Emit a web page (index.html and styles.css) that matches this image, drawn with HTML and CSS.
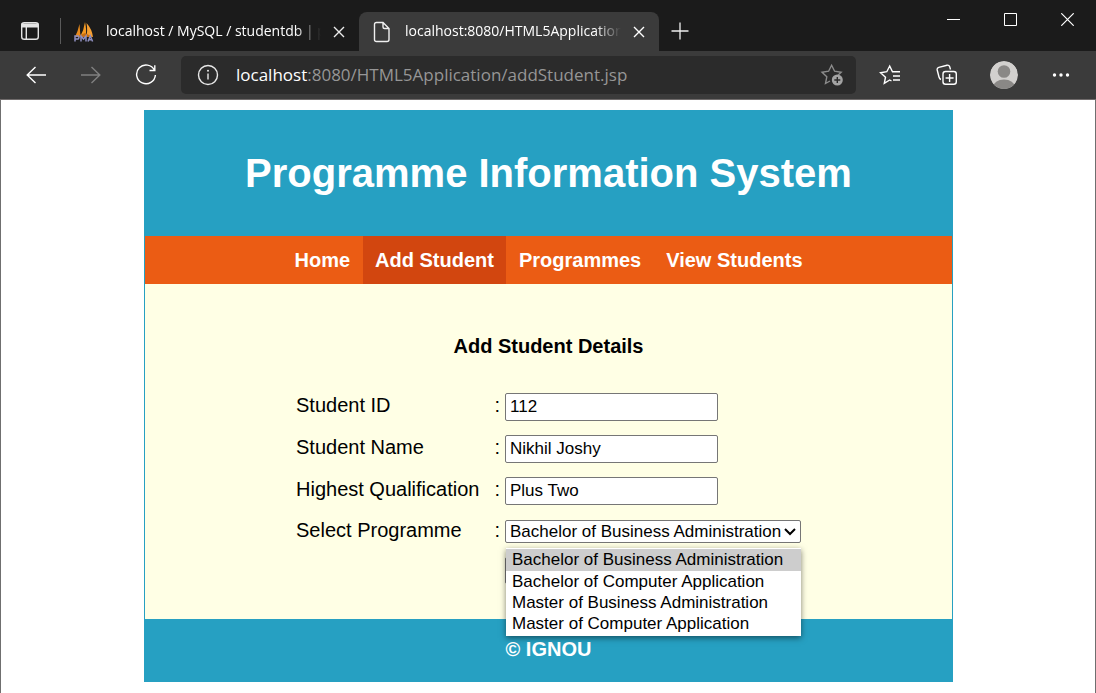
FILE: index.html
```html
<!DOCTYPE html>
<html lang="en">
<head>
<meta charset="utf-8">
<title>Programme Information System</title>
<link rel="stylesheet" href="styles.css">
</head>
<body>
<div class="browser">
  <header class="titlebar">
    <button class="tab-actions" aria-label="Tab actions">
      <svg width="20" height="20" viewBox="0 0 20 20" fill="none" stroke="#e4e4e4" stroke-width="1.4"><rect x="1.7" y="1.7" width="16.6" height="16.6" rx="2.6"/><path d="M2 3.2h16v2.6H2z" fill="#e4e4e4"/><path d="M6.3 6v12"/></svg>
    </button>
    <div class="tab">
      <svg class="tab-icon" width="20" height="20" viewBox="0 0 20 20"><path d="M1 15Q4 9 5.500 2L6.500 15z" fill="#e88a1c"/><path d="M6 15Q10 8 11 0Q13 9 11.500 15z" fill="#f59a23"/><path d="M12 15Q14 9 12.500 1Q18 7 19 15z" fill="#f7a033"/><path d="M2 15L11 11L19 15z" fill="#c96f12"/><path d="M1 19.500V14h3.200q1.500 1.700 0 3H1M7 19.500V14l2.500 3L12 14v5.500M14 19.500l2.300-5.500 2.300 5.500M15 17.700h3" stroke="#8f8fc0" fill="none" stroke-width="1.500"/></svg>
      <span class="tab-title">localhost / MySQL / studentdb | phpMyAdmin</span>
      <button class="tab-close" aria-label="Close tab"><svg width="12" height="12" viewBox="0 0 12 12" stroke="#ececec" stroke-width="1.4"><path d="M1 1l10 10M11 1L1 11"/></svg></button>
    </div>
    <div class="tab tab-active">
      <svg class="tab-icon" width="18" height="22" viewBox="0 0 18 22" fill="none" stroke="#f0f0f0" stroke-width="1.4"><path d="M3.500 1.500H10L16 7.500V18.500Q16 20.500 14 20.500H3.500Q1.500 20.500 1.500 18.500V3.500Q1.500 1.500 3.500 1.500zM10 1.500V6Q10 7.500 11.500 7.500H16"/></svg>
      <span class="tab-title">localhost:8080/HTML5Application/addStudent.jsp</span>
      <button class="tab-close" aria-label="Close tab"><svg width="12" height="12" viewBox="0 0 12 12" stroke="#fff" stroke-width="1.4"><path d="M1 1l10 10M11 1L1 11"/></svg></button>
    </div>
    <button class="new-tab" aria-label="New tab"><svg width="18" height="18" viewBox="0 0 18 18" stroke="#f0f0f0" stroke-width="1.3"><path d="M9 0.500v17M0.500 9h17"/></svg></button>
    <div class="window-controls">
      <button aria-label="Minimize"><svg width="13" height="13" viewBox="0 0 13 13" stroke="#fff"><path d="M0 6.500h13"/></svg></button>
      <button aria-label="Maximize"><svg width="13" height="13" viewBox="0 0 13 13" stroke="#fff" fill="none"><path d="M.5.5h12v12H.5z"/></svg></button>
      <button aria-label="Close window"><svg width="13" height="13" viewBox="0 0 13 13" stroke="#fff" stroke-width="1.2"><path d="M.3.3l12.400 12.400M12.700.3L.3 12.700"/></svg></button>
    </div>
  </header>
  <div class="toolbar">
    <button class="tool nav-tool" aria-label="Back"><svg width="20" height="18" viewBox="0 0 20 18" fill="none" stroke="#fff" stroke-width="1.4"><path d="M9.500 1L1.200 9l8.300 8M1.200 9H20"/></svg></button>
    <button class="tool nav-tool" aria-label="Forward"><svg width="20" height="18" viewBox="0 0 20 18" fill="none" stroke="#808080" stroke-width="1.4"><path d="M10.500 1l8.300 8-8.300 8M18.800 9H0"/></svg></button>
    <button class="tool nav-tool" aria-label="Refresh"><svg width="22" height="22" viewBox="0 0 22 22" fill="none" stroke="#fff" stroke-width="1.4"><path d="M19.500 6.300A9.400 9.400 0 1 0 20.400 11M19.800 1.300v5.200h-5.300"/></svg></button>
    <div class="address">
      <button class="address-button" aria-label="Site information"><svg width="22" height="22" viewBox="0 0 22 22" fill="none" stroke="#e8e8e8" stroke-width="1.4"><circle cx="11" cy="11" r="9.500"/><path d="M11 9.500v6"/><circle cx="11" cy="6.800" r="1" fill="#e8e8e8" stroke="none"/></svg></button>
      <div class="url" role="textbox" aria-label="Address" contenteditable="true" spellcheck="false"><span class="host">localhost</span>:8080/HTML5Application/addStudent.jsp</div>
      <button class="address-button" aria-label="Add to favorites"><svg width="24" height="24" viewBox="0 0 24 24" fill="none" stroke="#8c8c8c" stroke-width="1.4"><path d="M10 18L5.500 20.500l1.300-6.700L2 9.200l6.600-1L11.600 2.300l3 5.900 6.600 1-3 2.800"/><circle cx="17.300" cy="17" r="5.500" fill="#a3a3a3" stroke="none"/><path d="M17.300 14v6M14.300 17h6" stroke="#2b2b2b"/></svg></button>
    </div>
    <button class="tool" aria-label="Favorites"><svg width="22" height="22" viewBox="0 0 22 22" fill="none" stroke="#fff" stroke-width="1.4"><path d="M12.500 17l-1.800-1-5.400 3.400 1.200-6.200L1.500 8.700l6.300-1L10.700 2l2.800 5.800H21M14 12h7M14 16h7"/></svg></button>
    <button class="tool" aria-label="Collections"><svg width="22" height="22" viewBox="0 0 22 22" fill="none" stroke="#fff" stroke-width="1.4"><rect x="7" y="7.500" width="13.300" height="12.800" rx="2.500"/><path d="M13.600 10v8M9.600 14h8M5 15.500Q3.500 15 3 13L1.200 6Q.8 4 2.800 3.300L11 1.200Q13 .8 13.700 2.800l.8 2.700"/></svg></button>
    <button class="tool" aria-label="Profile"><svg width="28" height="28" viewBox="0 0 28 28"><defs><clipPath id="face"><circle cx="14" cy="14" r="14"/></clipPath></defs><g clip-path="url(#face)"><circle cx="14" cy="14" r="14" fill="#d2d0ce"/><circle cx="14" cy="10.500" r="6.300" fill="#8a8886"/><ellipse cx="14" cy="26" rx="11" ry="7.500" fill="#8a8886"/></g></svg></button>
    <button class="tool" aria-label="Settings and more"><svg width="18" height="6" viewBox="0 0 18 6" fill="#fff"><circle cx="2.500" cy="3" r="1.700"/><circle cx="9" cy="3" r="1.700"/><circle cx="15.500" cy="3" r="1.700"/></svg></button>
  </div>
  <div class="viewport">
    <div class="page">
      <h1 class="banner">Programme Information System</h1>
      <nav class="menu">
        <a href="#home">Home</a>
        <a href="#add" class="current" aria-current="page">Add Student</a>
        <a href="#programmes">Programmes</a>
        <a href="#students">View Students</a>
      </nav>
      <main class="content">
        <h2 class="form-title">Add Student Details</h2>
        <form>
          <table class="form-table">
            <tr><td><label for="sid">Student ID</label></td><td class="colon">:</td><td><input id="sid" type="text" value="112"></td></tr>
            <tr><td><label for="sname">Student Name</label></td><td class="colon">:</td><td><input id="sname" type="text" value="Nikhil Joshy"></td></tr>
            <tr><td><label for="qual">Highest Qualification</label></td><td class="colon">:</td><td><input id="qual" type="text" value="Plus Two"></td></tr>
            <tr><td><label for="prog">Select Programme</label></td><td class="colon">:</td><td>
              <div class="picker">
                <select id="prog">
                  <option>Bachelor of Business Administration</option>
                  <option>Bachelor of Computer Application</option>
                  <option>Master of Business Administration</option>
                  <option>Master of Computer Application</option>
                </select>
                <svg class="chevron" width="12" height="8" viewBox="0 0 12 8" fill="none" stroke="#000" stroke-width="2"><path d="M1 1l5 5 5-5"/></svg>
                <ul class="options" role="listbox" aria-label="Select Programme">
                  <li role="option" class="selected" aria-selected="true">Bachelor of Business Administration</li>
                  <li role="option">Bachelor of Computer Application</li>
                  <li role="option">Master of Business Administration</li>
                  <li role="option">Master of Computer Application</li>
                </ul>
              </div>
            </td></tr>
            <tr><td></td><td></td><td><button class="submit" type="submit" aria-label="Add"></button></td></tr>
          </table>
        </form>
      </main>
      <footer class="footer">© IGNOU</footer>
    </div>
  </div>
</div>
</body>
</html>
```
FILE: styles.css
```css
* { box-sizing: border-box; }
body { margin: 0; background: #fff; font-family: Arial, "Liberation Sans", sans-serif; font-size: 20px; color: #000; }
button { font: inherit; cursor: pointer; }
.browser { display: flex; flex-direction: column; min-height: 100vh; }
.titlebar button, .toolbar button { display: flex; align-items: center; justify-content: center; padding: 0; border: 0; background: none; flex: none; }

.titlebar { display: flex; align-items: flex-end; height: 51px; background: #1b1b1b; color: #fff; font-family: "Segoe UI", "Open Sans", sans-serif; font-size: 14px; }
.titlebar .tab-actions { width: 61px; height: 26px; margin-bottom: 7px; border-right: 1px solid #5a5a5a; }
.tab { display: flex; align-items: center; width: 298px; height: 39px; padding: 0 14px 0 13px; }
.tab-active { width: 300px; padding-left: 14px; background: #3b3b3b; border-radius: 8px 8px 0 0; }
.tab-icon { flex: none; margin-right: 12px; }
.tab-active .tab-icon { margin-right: 14px; }
.tab-title { flex: 1; min-width: 0; overflow: hidden; white-space: nowrap; padding-bottom: 2px; line-height: 24px; -webkit-mask-image: linear-gradient(to right, #000 88%, transparent); mask-image: linear-gradient(to right, #000 88%, transparent); }
.titlebar .tab-close { width: 12px; height: 12px; margin-left: 12px; }
.titlebar .new-tab { width: 42px; height: 40px; }
.window-controls { display: flex; align-self: flex-start; margin-left: auto; }
.titlebar .window-controls button { width: 57px; height: 39px; }

.toolbar { display: flex; align-items: center; height: 49px; padding: 0 7px 1px 8px; background: #3b3b3b; border-bottom: 1px solid #6f6b6b; }
.toolbar .tool { width: 57px; height: 38px; }
.toolbar .nav-tool { width: 55px; }
.address { display: flex; flex: 1; align-items: center; min-width: 0; height: 38px; margin: 0 5px 0 8px; padding: 0 12px 0 16px; border-radius: 5px; background: #2b2b2b; }
.url { flex: 1; min-width: 0; margin-left: 17px; overflow: hidden; white-space: nowrap; outline: 0; font-family: "Segoe UI", "Open Sans", sans-serif; font-size: 17px; line-height: 26px; color: #969696; }
.host { color: #fff; }

.viewport { flex: 1; padding: 10px 0 11px 1px; border: solid #6f6f6f; border-width: 0 1px; }
.page { width: 74%; margin: 0 auto; border: 1px solid #26a0c2; }
.banner { margin: 0; padding: 39px 10px 40px; background: #26a0c2; color: #fff; font-size: 40px; line-height: 46px; text-align: center; }
.menu { display: flex; justify-content: center; gap: 1px; background: #eb5c14; }
.menu a { padding: 12px; color: #fff; font-weight: bold; line-height: 24px; text-decoration: none; }
.menu .current { background: #d2460f; }
.content { padding: 50px 10px 28px; background: #ffffe5; }
.form-title { margin: 0 0 28px; font-size: 20px; line-height: 24px; text-align: center; }
.form-table { margin: 0 auto; border-spacing: 0; }
.form-table td { padding: 7px 0; line-height: 23px; vertical-align: baseline; }
.form-table .colon { padding: 7px 5px 7px 15px; }
.form-table input { display: block; width: 213px; height: 28px; padding: 0 4px; border: 1px solid #767676; border-radius: 2px; background: #fff; color: #000; font: 17px Arial, "Liberation Sans", sans-serif; }
.picker { position: relative; width: 296px; }
.picker select { display: block; width: 100%; height: 23px; padding: 0 4px; border: 1px solid #767676; border-radius: 2px; background: #fff; color: #000; font: 17px/21px Arial, "Liberation Sans", sans-serif; appearance: none; }
.chevron { position: absolute; right: 5px; top: 8px; }
.options { position: absolute; z-index: 1; top: 28px; left: 1px; right: 0; margin: 0; padding: 1px 0 2px; list-style: none; background: #fff; box-shadow: 0 2px 6px rgba(0, 0, 0, .5); font-size: 17px; }
.options li { padding: 0 6px; line-height: 21px; white-space: nowrap; }
.options .selected { line-height: 22px; background: #cdcdcd; }
.submit { display: block; width: 64px; height: 27px; border: 1px solid #767676; border-radius: 2px; background: #efefef; }
.footer { padding: 18px 10px 20px; background: #26a0c2; color: #fff; font-weight: bold; line-height: 24px; text-align: center; }
```
